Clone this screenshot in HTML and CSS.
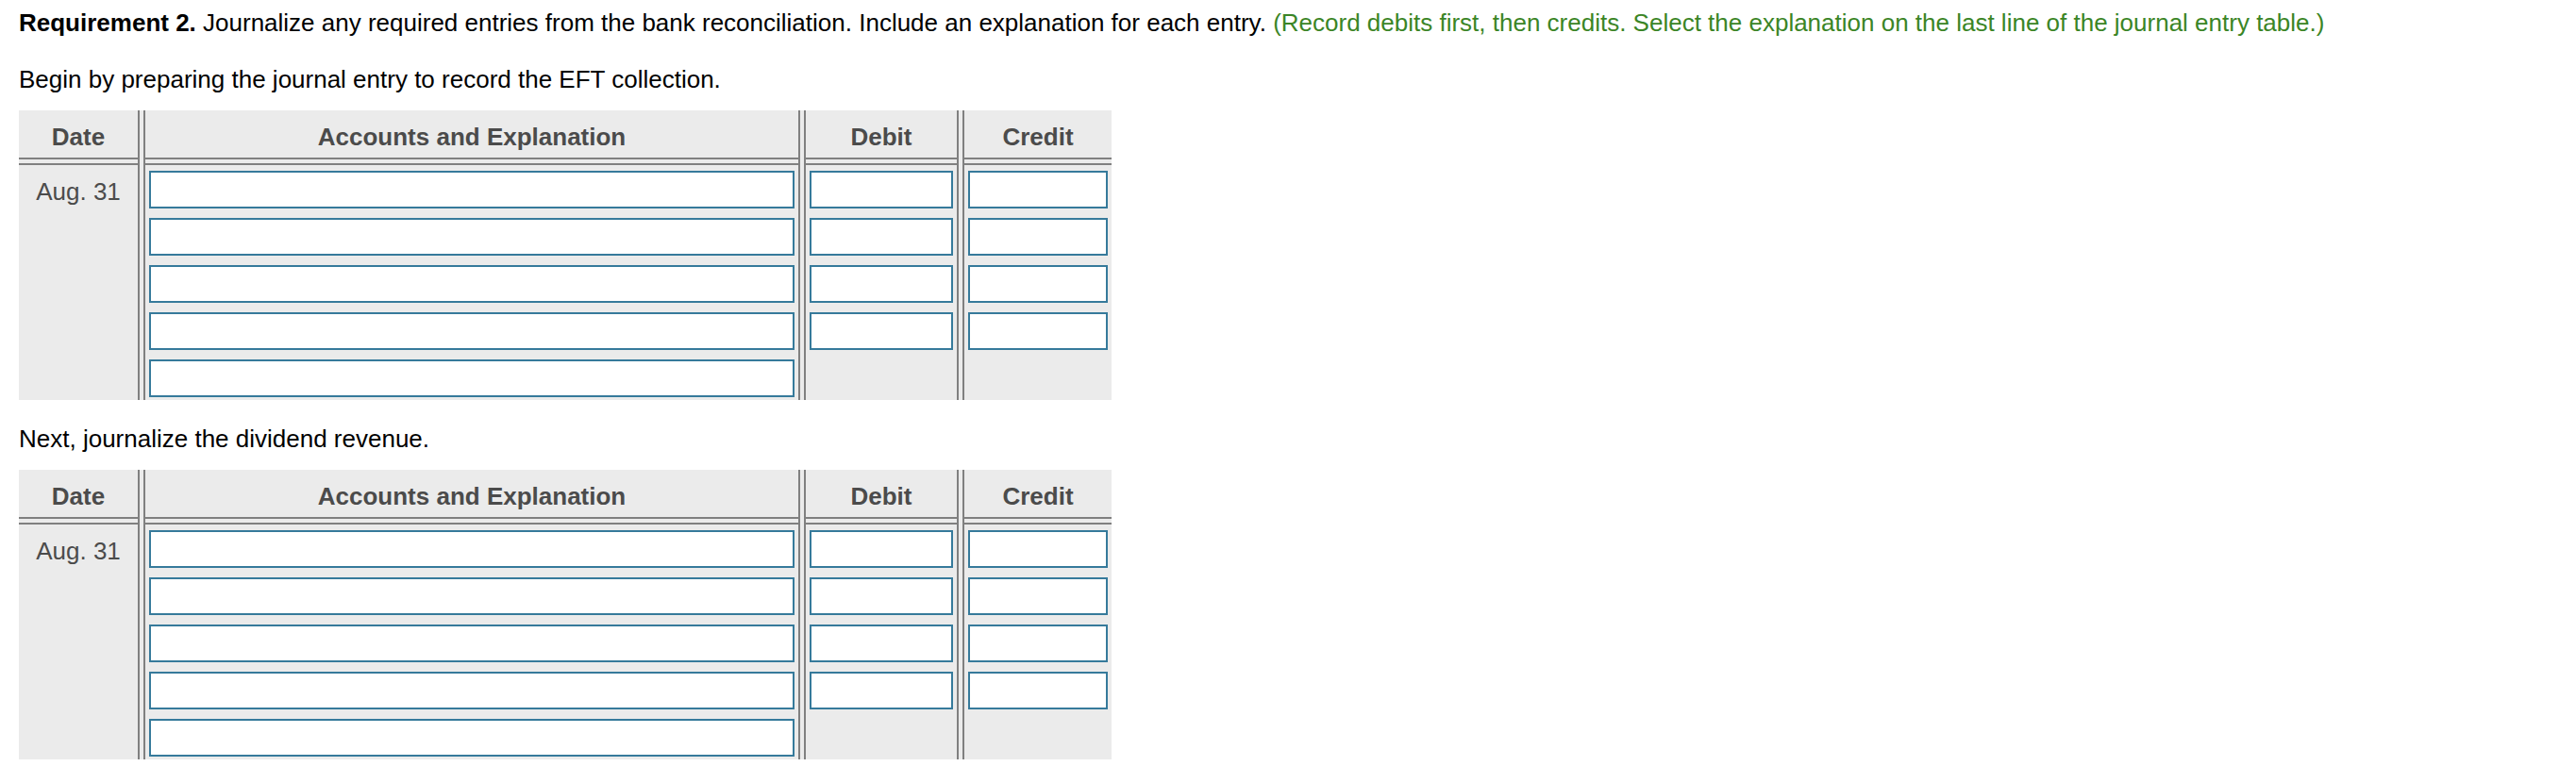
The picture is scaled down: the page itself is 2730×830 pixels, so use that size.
FILE: index.html
```html
<!DOCTYPE html>
<html lang="en">
<head>
  <meta charset="UTF-8" />
  <title>Requirement 2 - Journal entries</title>
  <link rel="stylesheet" href="styles.css">
</head>
<body>

<div class="page">
  <p class="req">
    <b>Requirement 2.</b> Journalize any required entries from the bank reconciliation. Include an explanation for each entry.
    <span class="hint">(Record debits first, then credits. Select the explanation on the last line of the journal entry table.)</span>
  </p>

  <p>Begin by preparing the journal entry to record the EFT collection.</p>

  <div class="journal">
    <div class="col col-date">
      <div class="head">Date</div>
      <div class="body date-cell">Aug. 31</div>
    </div>
    <div class="col col-acct">
      <div class="head">Accounts and Explanation</div>
      <div class="body">
        <input type="text">
        <input type="text">
        <input type="text">
        <input type="text">
        <input type="text">
      </div>
    </div>
    <div class="col col-debit">
      <div class="head">Debit</div>
      <div class="body">
        <input type="text">
        <input type="text">
        <input type="text">
        <input type="text">
      </div>
    </div>
    <div class="col col-credit">
      <div class="head">Credit</div>
      <div class="body">
        <input type="text">
        <input type="text">
        <input type="text">
        <input type="text">
      </div>
    </div>
  </div>

  <p>Next, journalize the dividend revenue.</p>

  <div class="journal">
    <div class="col col-date">
      <div class="head">Date</div>
      <div class="body date-cell">Aug. 31</div>
    </div>
    <div class="col col-acct">
      <div class="head">Accounts and Explanation</div>
      <div class="body">
        <input type="text">
        <input type="text">
        <input type="text">
        <input type="text">
        <input type="text">
      </div>
    </div>
    <div class="col col-debit">
      <div class="head">Debit</div>
      <div class="body">
        <input type="text">
        <input type="text">
        <input type="text">
        <input type="text">
      </div>
    </div>
    <div class="col col-credit">
      <div class="head">Credit</div>
      <div class="body">
        <input type="text">
        <input type="text">
        <input type="text">
        <input type="text">
      </div>
    </div>
  </div>
</div>

</body>
</html>
```

FILE: styles.css
```css
body {
  margin: 0;
  font-family: 'Liberation Sans', Arial, sans-serif;
  font-size: 26px;
  line-height: 30px;
  color: #000;
  background: #fff;
}

.page {
  padding: 9px 20px 7px;
}

p {
  margin: 0 0 18px;
}

p.req {
  margin-bottom: 30px;
}

.hint {
  color: #3b8526;
}

.journal {
  display: flex;
  gap: 4px;
  width: 1158px;
  height: 307px;
  margin-bottom: 26px;
  background: #ebebeb;
  color: #4b4b4b;
}

.col {
  display: flex;
  flex-direction: column;
  gap: 4px;
  box-sizing: border-box;
  border: 0 solid #808080;
}

.col-date { width: 128px; border-right-width: 2px; }
.col-acct { width: 696px; border-left-width: 2px; border-right-width: 2px; }
.col-debit { width: 164px; border-left-width: 2px; border-right-width: 2px; }
.col-credit { width: 158px; border-left-width: 2px; }

.head {
  padding: 13px 0 7px;
  border-bottom: 2px solid #808080;
  font-weight: bold;
  text-align: center;
}

.body {
  flex: 1;
  display: flex;
  flex-direction: column;
  gap: 10px;
  padding: 6px 4px 3px;
  border-top: 2px solid #808080;
}

.date-cell {
  display: block;
  padding-top: 13px;
  text-align: center;
}

input {
  box-sizing: border-box;
  width: 100%;
  height: 40px;
  margin: 0;
  padding: 0 6px;
  border: 2px solid #367a9b;
  border-radius: 0;
  background: #fff;
  font: inherit;
  outline: none;
}
```
